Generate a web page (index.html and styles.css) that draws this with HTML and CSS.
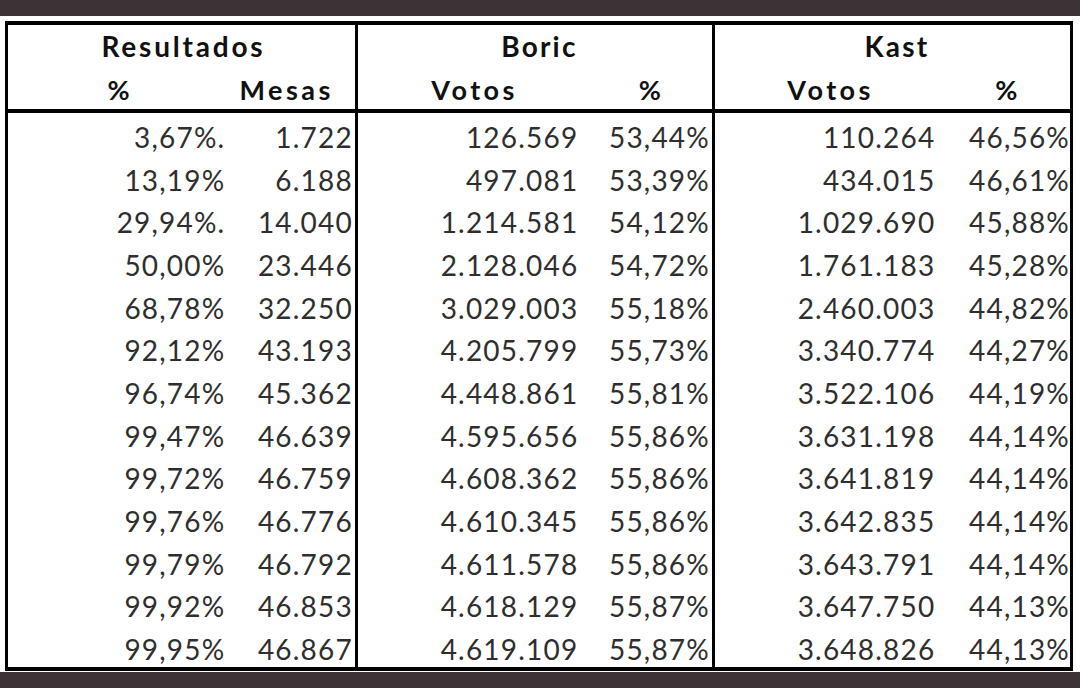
FILE: index.html
```html
<!DOCTYPE html>
<html lang="es">
<head>
<meta charset="utf-8">
<title>Resultados</title>
<link rel="stylesheet" href="styles.css">
</head>
<body>
<div class="bar top"></div>
<div class="sheet">
<table class="results">
<colgroup>
<col class="c1"><col class="c2"><col class="c3"><col class="c4"><col class="c5"><col class="c6">
</colgroup>
<thead>
<tr class="h1"><th colspan="2" class="grp res">Resultados</th><th colspan="2" class="grp cand">Boric</th><th colspan="2" class="grp cand">Kast</th></tr>
<tr class="h2"><th>%</th><th class="end mesas">Mesas</th><th class="sh">Votos</th><th class="end sh">%</th><th class="sh">Votos</th><th class="end sh">%</th></tr>
</thead>
<tbody>
<tr><td>3,67%.</td><td class="end">1.722</td><td>126.569</td><td class="end">53,44%</td><td class="k">110.264</td><td class="end last">46,56%</td></tr>
<tr><td>13,19%</td><td class="end">6.188</td><td>497.081</td><td class="end">53,39%</td><td class="k">434.015</td><td class="end last">46,61%</td></tr>
<tr><td>29,94%.</td><td class="end">14.040</td><td>1.214.581</td><td class="end">54,12%</td><td class="k">1.029.690</td><td class="end last">45,88%</td></tr>
<tr><td>50,00%</td><td class="end">23.446</td><td>2.128.046</td><td class="end">54,72%</td><td class="k">1.761.183</td><td class="end last">45,28%</td></tr>
<tr><td>68,78%</td><td class="end">32.250</td><td>3.029.003</td><td class="end">55,18%</td><td class="k">2.460.003</td><td class="end last">44,82%</td></tr>
<tr><td>92,12%</td><td class="end">43.193</td><td>4.205.799</td><td class="end">55,73%</td><td class="k">3.340.774</td><td class="end last">44,27%</td></tr>
<tr><td>96,74%</td><td class="end">45.362</td><td>4.448.861</td><td class="end">55,81%</td><td class="k">3.522.106</td><td class="end last">44,19%</td></tr>
<tr><td>99,47%</td><td class="end">46.639</td><td>4.595.656</td><td class="end">55,86%</td><td class="k">3.631.198</td><td class="end last">44,14%</td></tr>
<tr><td>99,72%</td><td class="end">46.759</td><td>4.608.362</td><td class="end">55,86%</td><td class="k">3.641.819</td><td class="end last">44,14%</td></tr>
<tr><td>99,76%</td><td class="end">46.776</td><td>4.610.345</td><td class="end">55,86%</td><td class="k">3.642.835</td><td class="end last">44,14%</td></tr>
<tr><td>99,79%</td><td class="end">46.792</td><td>4.611.578</td><td class="end">55,86%</td><td class="k">3.643.791</td><td class="end last">44,14%</td></tr>
<tr><td>99,92%</td><td class="end">46.853</td><td>4.618.129</td><td class="end">55,87%</td><td class="k">3.647.750</td><td class="end last">44,13%</td></tr>
<tr><td>99,95%</td><td class="end">46.867</td><td>4.619.109</td><td class="end">55,87%</td><td class="k">3.648.826</td><td class="end last">44,13%</td></tr>
</tbody>
</table>
</div>
<div class="bar bottom"></div>
</body>
</html>
```
FILE: styles.css
```css
html, body {
  margin: 0;
  padding: 0;
  background: #ffffff;
  width: 1080px;
  height: 688px;
  overflow: hidden;
}
body {
  font-family: Lato, "Liberation Sans", sans-serif;
}
.bar {
  background: #3b3335;
}
.bar.top {
  height: 16px;
  margin-bottom: 5px;
}
.bar.bottom {
  height: 20px;
  margin-top: 1px;
}
.sheet {
  padding-left: 5px;
}
.results {
  border-collapse: collapse;
  table-layout: fixed;
  width: 1068px;
  border-top: 4px solid #000;
  border-bottom: 4px solid #000;
  border-left: 3px solid #000;
  border-right: 3px solid #000;
}
.c1 { width: 224px; }
.c2 { width: 123px; }
.c3 { width: 227px; }
.c4 { width: 127px; }
.c5 { width: 225px; }
.c6 { width: 130px; }
.results th {
  font-weight: 700;
  color: #111;
  text-align: center;
  padding: 0;
  vertical-align: top;
  box-sizing: border-box;
}
.results .h1 th {
  height: 44px;
  font-size: 28px;
  line-height: 28px;
  letter-spacing: 2.2px;
  padding-top: 7px;
  border-left: 3px solid #000;
}
.results .h1 th.res {
  letter-spacing: 2.8px;
  padding-left: 4px;
}
.results .h1 th.cand {
  padding-left: 9px;
}
.results .h2 th {
  height: 44px;
  font-size: 27px;
  line-height: 27px;
  letter-spacing: 3.5px;
  padding-top: 9px;
  border-bottom: 4px solid #000;
}
.results .h2 th.mesas {
  padding-right: 14px;
}
.results .h2 th.sh {
  padding-left: 6px;
}
.results td {
  height: 42.68px;
  box-sizing: border-box;
  padding: 12px 7px 0 0;
  text-align: right;
  font-size: 28px;
  line-height: 28px;
  letter-spacing: 1.2px;
  color: #2e2e2e;
  vertical-align: top;
  white-space: nowrap;
}
.results tbody tr:first-child td {
  padding-top: 10px;
}
.results tbody tr:last-child td {
  height: 45.8px;
}
.results td.k {
  padding-right: 5px;
}
.results .end {
  border-right: 3px solid #000;
  padding-right: 2px;
}
.results td.last {
  padding-right: 0;
}
.results th.end {
  padding-right: 0;
}
```
